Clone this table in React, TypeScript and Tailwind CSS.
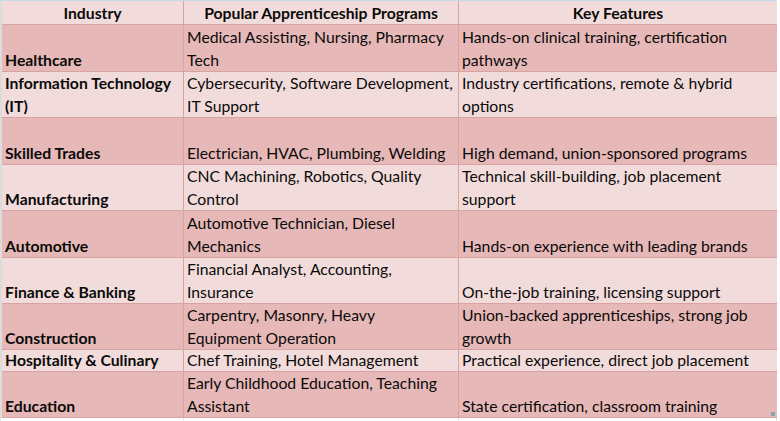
const rows = [
  { industry: ['Healthcare'], programs: ['Medical Assisting, Nursing, Pharmacy', 'Tech'], features: ['Hands-on clinical training, certification', 'pathways'], h: 'h-[47px]', dark: true },
  { industry: ['Information Technology', '(IT)'], programs: ['Cybersecurity, Software Development,', 'IT Support'], features: ['Industry certifications, remote & hybrid', 'options'], h: 'h-[46px]', dark: false },
  { industry: ['Skilled Trades'], programs: ['Electrician, HVAC, Plumbing, Welding'], features: ['High demand, union-sponsored programs'], h: 'h-[47px]', dark: true },
  { industry: ['Manufacturing'], programs: ['CNC Machining, Robotics, Quality', 'Control'], features: ['Technical skill-building, job placement', 'support'], h: 'h-[46px]', dark: false },
  { industry: ['Automotive'], programs: ['Automotive Technician, Diesel', 'Mechanics'], features: ['Hands-on experience with leading brands'], h: 'h-[47px]', dark: true },
  { industry: ['Finance & Banking'], programs: ['Financial Analyst, Accounting,', 'Insurance'], features: ['On-the-job training, licensing support'], h: 'h-[46px]', dark: false },
  { industry: ['Construction'], programs: ['Carpentry, Masonry, Heavy', 'Equipment Operation'], features: ['Union-backed apprenticeships, strong job', 'growth'], h: 'h-[46px]', dark: true },
  { industry: ['Hospitality & Culinary'], programs: ['Chef Training, Hotel Management'], features: ['Practical experience, direct job placement'], h: 'h-[22px]', dark: false },
  { industry: ['Education'], programs: ['Early Childhood Education, Teaching', 'Assistant'], features: ['State certification, classroom training'], h: 'h-[46px]', dark: true },
];

const Cell = ({ lines, bold, last }: { lines: string[]; bold?: boolean; last?: boolean }) => (
  <div
    className={`flex flex-col justify-end pl-[3px] overflow-hidden ${last ? '' : 'border-r border-[#d9a3a2]'} ${bold ? 'font-bold' : ''}`}
  >
    {lines.map((l, i) => (
      <span key={i} className="block whitespace-nowrap leading-[23px]">
        {l}
      </span>
    ))}
  </div>
);

export default function App() {
  return (
    <div className="w-[780px] h-[421px] bg-white overflow-hidden text-[15.75px] text-[#0a0a0a]" style={{ fontFamily: 'Lato, "Liberation Sans", sans-serif' }}>
      <div className="h-[1px] w-[777px] bg-[#c6d9ec]" />
      <div className="w-[777px] border-l-2 border-[#dcdcdc]">
        <div className="grid grid-cols-[182px_275px_318px] h-[24px] bg-[#f2dcdb] border-b border-[#d9a3a2] font-bold">
          <div className="flex items-end justify-center border-r border-[#d9a3a2] leading-[23px]">Industry</div>
          <div className="flex items-end justify-center border-r border-[#d9a3a2] leading-[23px]">Popular Apprenticeship Programs</div>
          <div className="flex items-end justify-center leading-[23px]">Key Features</div>
        </div>
        {rows.map((r, i) => (
          <div
            key={i}
            className={`grid grid-cols-[182px_275px_318px] ${r.h} border-b border-[#d9a3a2] ${r.dark ? 'bg-[#e6b8b7]' : 'bg-[#f2dcdb]'}`}
          >
            <Cell lines={r.industry} bold />
            <Cell lines={r.programs} />
            <Cell lines={r.features} last />
          </div>
        ))}
      </div>
      <div className="relative grid grid-cols-[184px_275px_318px] h-[10px] w-[777px]">
        <div className="border-l border-r border-[#e4e4e4]" />
        <div className="border-r border-[#e4e4e4]" />
        <div className="border-r border-[#e4e4e4]" />
        <div className="absolute right-[2px] -top-[6px] w-[4px] h-[4px] bg-[radial-gradient(#8aa0b8_1px,transparent_1px)] [background-size:2px_2px]" />
      </div>
    </div>
  );
}
